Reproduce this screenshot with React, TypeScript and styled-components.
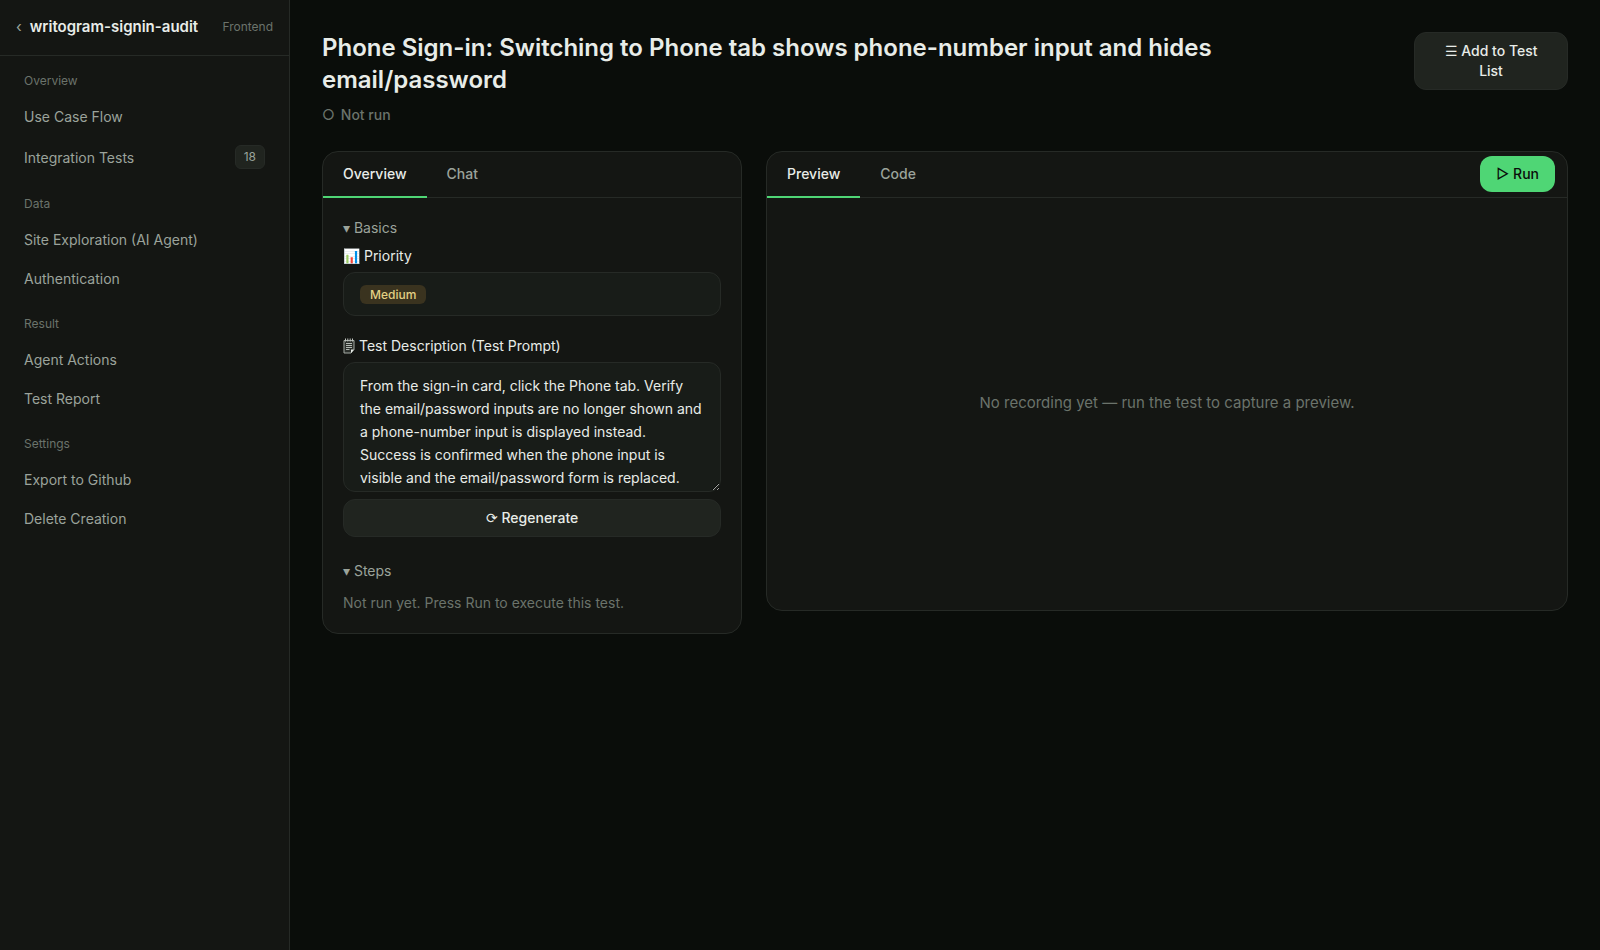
import React from "react";
import styled, { createGlobalStyle } from "styled-components";

const color = {
  page: "#0a0d0a",
  panel: "#141613",
  field: "#181c18",
  raised: "#20241f",
  line: "#262a26",
  text: "#e8ece8",
  soft: "#9ba39b",
  faint: "#6b736b",
  accent: "#4fd675",
};

const GlobalStyle = createGlobalStyle`
  *, *::before, *::after { box-sizing: border-box; }
  body {
    margin: 0;
    background: ${color.page};
    color: ${color.text};
    font-family: Inter, "Liberation Sans", sans-serif;
    font-size: 14px;
    line-height: 20px;
  }
  h1, h2, h3, p { margin: 0; }
  button, textarea { font: inherit; color: inherit; }
  button { cursor: pointer; }
`;

const Shell = styled.div`
  display: flex;
  min-height: 100vh;
`;

const Sidebar = styled.aside`
  flex: none;
  width: 290px;
  background: ${color.panel};
  border-right: 1px solid ${color.line};
`;

const SidebarHeader = styled.header`
  display: flex;
  align-items: center;
  gap: 8px;
  height: 56px;
  padding: 0 16px 2px;
  border-bottom: 1px solid ${color.line};
`;

const BackLink = styled.a`
  color: ${color.soft};
  font-size: 15px;
  text-decoration: none;
`;

const ProjectName = styled.span`
  flex: 1;
  font-size: 15px;
  line-height: 24px;
  font-weight: 600;
  white-space: nowrap;
`;

const ProjectKind = styled.span`
  color: ${color.faint};
  font-size: 12px;
`;

const Nav = styled.nav`
  padding: 0 12px;
`;

const NavLabel = styled.h2`
  padding: 16px 12px 8px;
  color: ${color.faint};
  font-size: 12px;
  line-height: 18px;
  font-weight: 400;
`;

const NavItem = styled.a`
  display: flex;
  align-items: center;
  justify-content: space-between;
  margin-bottom: 2px;
  padding: 8px 12px;
  line-height: 21px;
  color: ${color.soft};
  text-decoration: none;
`;

const Count = styled.span`
  padding: 2px 8px;
  border: 1px solid ${color.line};
  border-radius: 6px;
  background: ${color.raised};
  font-size: 12px;
  line-height: 18px;
`;

const Main = styled.main`
  flex: 1;
  min-width: 0;
  padding: 32px;
`;

const PageHeader = styled.header`
  display: flex;
  align-items: flex-start;
  justify-content: space-between;
  gap: 24px;
  margin-bottom: 26px;
`;

const Heading = styled.div`
  flex: 0 1 960px;
`;

const Title = styled.h1`
  font-size: 24px;
  line-height: 32px;
  font-weight: 600;
`;

const Status = styled.p`
  margin-top: 8px;
  color: ${color.faint};
  line-height: 21px;
  font-weight: 500;
  display: flex;
  gap: 6px;
`;

const Button = styled.button<{ $primary?: boolean; $width?: string }>`
  flex: none;
  width: ${(p) => p.$width ?? "auto"};
  padding: 8px ${(p) => (p.$primary ? "16px" : "20px")};
  border: ${(p) => (p.$primary ? "0" : `1px solid ${color.line}`)};
  border-radius: 12px;
  background: ${(p) => (p.$primary ? color.accent : color.raised)};
  color: ${(p) => (p.$primary ? color.page : color.text)};
  font-weight: 500;
`;

const Columns = styled.div`
  display: grid;
  grid-template-columns: 420px minmax(0, 1fr);
  align-items: start;
  gap: 24px;
`;

const Card = styled.section<{ $tall?: boolean }>`
  display: flex;
  flex-direction: column;
  min-height: ${(p) => (p.$tall ? "460px" : "0")};
  border: 1px solid ${color.line};
  border-radius: 16px;
  background: ${color.panel};
  overflow: hidden;
`;

const TabBar = styled.div`
  display: flex;
  align-items: flex-start;
  height: 46px;
  padding-right: 12px;
  border-bottom: 1px solid ${color.line};

  & > ${Button} {
    margin-top: 4px;
  }
`;

const TabList = styled.div`
  display: flex;
  flex: 1;
`;

const Tab = styled.button`
  height: 46px;
  padding: 0 20px;
  border: 0;
  border-bottom: 2px solid transparent;
  background: none;
  color: ${color.soft};
  font-weight: 500;

  &[aria-selected="true"] {
    border-bottom-color: ${color.accent};
    color: ${color.text};
  }
`;

const CardBody = styled.div`
  padding: 20px;
`;

const Section = styled.details`
  & + & {
    margin-top: 24px;
  }
`;

const SectionTitle = styled.summary`
  list-style: none;
  color: ${color.soft};
  cursor: pointer;
`;

const Field = styled.div`
  margin-top: 8px;

  & + & {
    margin-top: 20px;
  }
`;

const FieldLabel = styled.label`
  display: flex;
  align-items: center;
  gap: 4px;
  margin-bottom: 6px;
  font-size: 14px;
  font-weight: 400;
`;

const PriorityBox = styled.div`
  display: flex;
  align-items: center;
  height: 44px;
  padding: 0 16px;
  border: 1px solid ${color.line};
  border-radius: 12px;
  background: ${color.field};
`;

const Pill = styled.span`
  padding: 0 10px;
  border-radius: 6px;
  background: #3a331f;
  color: #e3d084;
  font-size: 12px;
  line-height: 19px;
  font-weight: 500;
`;

const Prompt = styled.textarea`
  display: block;
  width: 100%;
  height: 130px;
  margin-bottom: 7px;
  padding: 11px 16px;
  border: 1px solid ${color.line};
  border-radius: 12px;
  background: ${color.field};
  line-height: 23px;
  resize: vertical;
  overflow: hidden;
  outline: none;
`;

const Hint = styled.p`
  margin-top: 12px;
  color: ${color.faint};
`;

const EmptyPreview = styled.div`
  display: flex;
  flex: 1;
  align-items: center;
  justify-content: center;
  padding: 20px 20px 22px;
  color: ${color.faint};
  font-size: 15px;
  line-height: 24px;
`;

const navGroups: { label: string; items: { name: string; count?: number }[] }[] = [
  { label: "Overview", items: [{ name: "Use Case Flow" }, { name: "Integration Tests", count: 18 }] },
  { label: "Data", items: [{ name: "Site Exploration (AI Agent)" }, { name: "Authentication" }] },
  { label: "Result", items: [{ name: "Agent Actions" }, { name: "Test Report" }] },
  { label: "Settings", items: [{ name: "Export to Github" }, { name: "Delete Creation" }] },
];

const promptText =
  "From the sign-in card, click the Phone tab. Verify the email/password inputs are no longer shown and a phone-number input is displayed instead. Success is confirmed when the phone input is visible and the email/password form is replaced.";

function NotepadIcon() {
  return (
    <svg width="12" height="16" viewBox="0 0 12 16" fill="none" aria-hidden="true">
      <path d="M1 2.5H11V11.5L8 15H1Z" fill="#2c302c" stroke="#a4aaa4" strokeWidth="1" />
      <path d="M2.5 0.5V3.5M4.8 0.5V3.5M7.2 0.5V3.5M9.5 0.5V3.5" stroke="#c0c5c0" strokeWidth="1" />
      <path d="M3 5.5H9M3 7.5H9M3 9.5H9M3 11.5H6.5" stroke="#b4bab4" strokeWidth="1" />
      <path d="M8 15V11.5H11Z" fill="#e8ece8" />
    </svg>
  );
}

function Tabs({ names }: { names: string[] }) {
  const [active, setActive] = React.useState(names[0]);
  return (
    <TabList role="tablist">
      {names.map((name) => (
        <Tab key={name} role="tab" aria-selected={name === active} onClick={() => setActive(name)}>
          {name}
        </Tab>
      ))}
    </TabList>
  );
}

export default function App() {
  return (
    <>
      <GlobalStyle />
      <Shell lang="en">
        <Sidebar>
          <SidebarHeader>
            <BackLink href="#" aria-label="Back">‹</BackLink>
            <ProjectName>writogram-signin-audit</ProjectName>
            <ProjectKind>Frontend</ProjectKind>
          </SidebarHeader>
          <Nav>
            {navGroups.map((group) => (
              <React.Fragment key={group.label}>
                <NavLabel>{group.label}</NavLabel>
                {group.items.map((item) => (
                  <NavItem key={item.name} href="#">
                    {item.name}
                    {item.count !== undefined && <Count>{item.count}</Count>}
                  </NavItem>
                ))}
              </React.Fragment>
            ))}
          </Nav>
        </Sidebar>
        <Main>
          <PageHeader>
            <Heading>
              <Title>Phone Sign-in: Switching to Phone tab shows phone-number input and hides email/password</Title>
              <Status>
                <span>○</span>
                <span>Not run</span>
              </Status>
            </Heading>
            <Button $width="154px">☰ Add to Test List</Button>
          </PageHeader>
          <Columns>
            <Card>
              <TabBar>
                <Tabs names={["Overview", "Chat"]} />
              </TabBar>
              <CardBody>
                <Section open>
                  <SectionTitle>▾ Basics</SectionTitle>
                  <Field>
                    <FieldLabel as="h3">📊 Priority</FieldLabel>
                    <PriorityBox>
                      <Pill>Medium</Pill>
                    </PriorityBox>
                  </Field>
                  <Field>
                    <FieldLabel htmlFor="prompt">
                      <NotepadIcon />
                      Test Description (Test Prompt)
                    </FieldLabel>
                    <Prompt id="prompt" defaultValue={promptText} spellCheck={false} />
                    <Button $width="100%">⟳ Regenerate</Button>
                  </Field>
                </Section>
                <Section open>
                  <SectionTitle>▾ Steps</SectionTitle>
                  <Hint>Not run yet. Press Run to execute this test.</Hint>
                </Section>
              </CardBody>
            </Card>
            <Card $tall>
              <TabBar>
                <Tabs names={["Preview", "Code"]} />
                <Button $primary>▷ Run</Button>
              </TabBar>
              <EmptyPreview>No recording yet — run the test to capture a preview.</EmptyPreview>
            </Card>
          </Columns>
        </Main>
      </Shell>
    </>
  );
}
